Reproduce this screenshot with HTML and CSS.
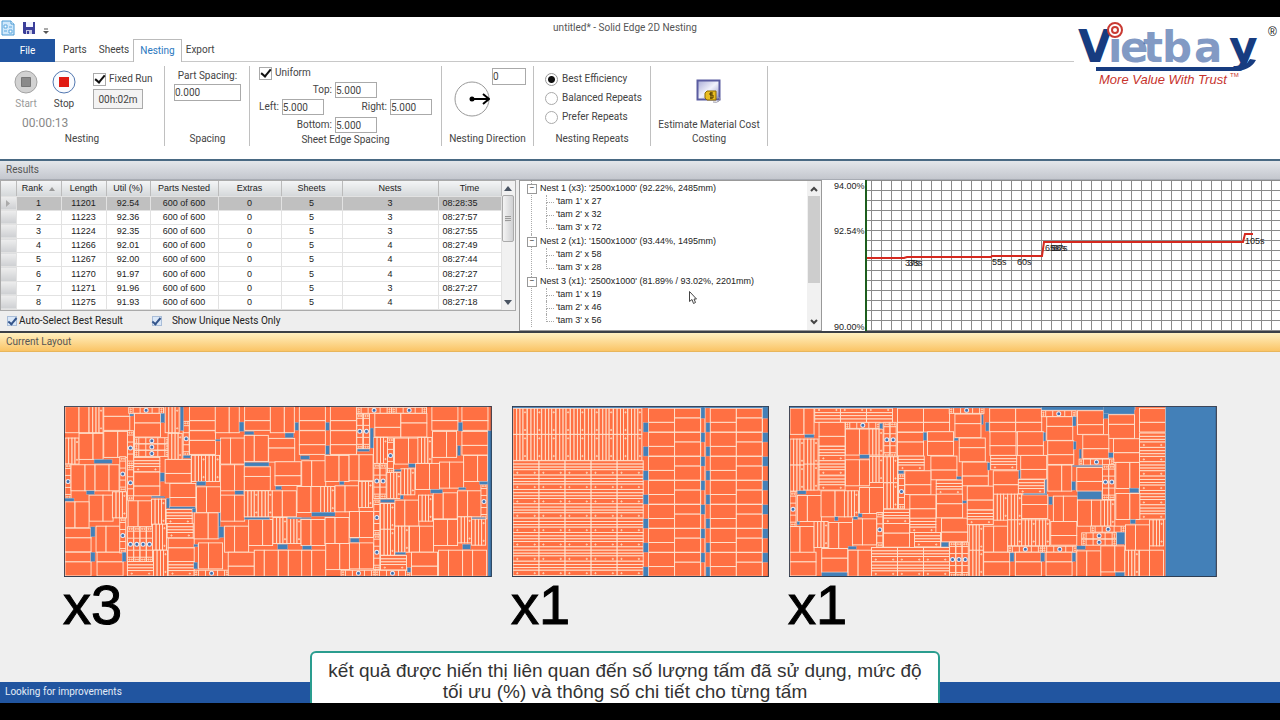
FILE: index.html
```html
<!DOCTYPE html>
<html lang="vi">
<head>
<meta charset="utf-8">
<title>untitled* - Solid Edge 2D Nesting</title>
<link rel="stylesheet" href="styles.css">
</head>
<body>
<div class="stage">
<main class="app">
  <header class="titlebar">
    <div class="quick">
      <svg class="doc-icon" width="14" height="16" viewBox="0 0 14 16"><path d="M1 1h9l3 3v11H1z" fill="#cfe8fb" stroke="#4a9ad4"/><path d="M10 1v3h3" fill="#fff" stroke="#4a9ad4"/><path d="M3 5h3v3H3zM8 7h3M3 11h3M8 10h3v3H8z" fill="#fff" stroke="#5aa7de"/></svg>
      <button class="plain" aria-label="Save"><svg width="12" height="12" viewBox="0 0 12 12"><path d="M0 0h12v12H1L0 11z" fill="#3b3f9a"/><path d="M3 0h7v5H3z" fill="#f3f5ff"/><path d="M3 8h6v4H3z" fill="#c9cbe6"/><path d="M4 9h2v3H4z" fill="#3b3f9a"/></svg></button>
      <button class="plain more" aria-label="Customize"><svg width="6" height="7" viewBox="0 0 6 7"><path d="M1 1h4" stroke="#555"/><path d="M0 3h6L3 6z" fill="#555"/></svg></button>
    </div>
    <h1>untitled* - Solid Edge 2D Nesting</h1>
  </header>
  <nav class="tabs">
    <button class="tab file">File</button><button class="tab">Parts</button><button class="tab">Sheets</button><button class="tab active">Nesting</button><button class="tab">Export</button>
  </nav>
  <section class="ribbon">
    <div class="group g-run">
      <div class="run-row">
        <button class="plain big off"><svg width="24" height="24" viewBox="0 0 24 24"><circle cx="12" cy="12" r="11" fill="#d2d2d2" stroke="#a3a3a3"/><path d="M7.500 7.500h9v9h-9z" fill="#8a8a8a" stroke="#777"/></svg><span>Start</span></button>
        <button class="plain big"><svg width="24" height="24" viewBox="0 0 24 24"><circle cx="12" cy="12" r="11" fill="#fafcff" stroke="#5277b0"/><path d="M7 7h10v10H7z" fill="#e01b14"/></svg><span>Stop</span></button>
        <div class="fixed"><label class="chk"><input type="checkbox" checked>Fixed Run</label><input class="box time" type="text" value="00h:02m" aria-label="Run time"></div>
      </div>
      <div class="timer">00:00:13</div>
      <h2>Nesting</h2>
    </div>
    <div class="group g-space">
      <label class="stack">Part Spacing:<input class="box" type="text" value="0.000"></label>
      <h2>Spacing</h2>
    </div>
    <div class="group g-edge">
      <label class="chk"><input type="checkbox" checked>Uniform</label>
      <label class="mid">Top:<input class="box" type="text" value="5.000"></label>
      <div class="sides"><label>Left:<input class="box" type="text" value="5.000"></label><label>Right:<input class="box" type="text" value="5.000"></label></div>
      <label class="mid">Bottom:<input class="box" type="text" value="5.000"></label>
      <h2>Sheet Edge Spacing</h2>
    </div>
    <div class="group g-dir">
      <div class="dir"><svg width="36" height="36" viewBox="0 0 36 36"><circle cx="18" cy="18" r="17" fill="#fff" stroke="#999"/><circle cx="18" cy="18" r="2.500"/><path d="M18 18h16M29 13l6 5-6 5" fill="none" stroke="#000" stroke-width="2"/></svg><input class="box" type="text" value="0" aria-label="Nesting angle"></div>
      <h2>Nesting Direction</h2>
    </div>
    <div class="group g-rep">
      <label><input type="radio" name="rep" checked>Best Efficiency</label>
      <label><input type="radio" name="rep">Balanced Repeats</label>
      <label><input type="radio" name="rep">Prefer Repeats</label>
      <h2>Nesting Repeats</h2>
    </div>
    <div class="group g-cost">
      <button class="plain cost"><svg width="26" height="26" viewBox="0 0 26 26"><defs><linearGradient id="scr" x2="1" y2="1"><stop offset="0" stop-color="#a9abd6"/><stop offset=".5" stop-color="#f0f1fb"/><stop offset="1" stop-color="#9193c6"/></linearGradient></defs><path d="M1.500 1.500h22v19h-22z" fill="url(#scr)" stroke="#5a5ca0" stroke-width="2"/><path d="M21 18q5 1 2 4-2 2-6 1" fill="none" stroke="#99a"/><path d="M9 14l2-2h9v9h-9l-2-2z" fill="#e9bd22" stroke="#8d6b00"/><path d="M17 14h-3v2h3v3h-3M15 13v7" fill="none" stroke="#4d3900"/></svg><span>Estimate Material Cost</span></button>
      <h2>Costing</h2>
    </div>
  </section>
  <h2 class="bar results-bar">Results</h2>
  <section class="results">
    <div class="left">
      <div class="gridwrap">
        <table>
          <colgroup><col class="c0"><col class="c1"><col class="c1"><col class="c2"><col class="c3"><col class="c4"><col class="c5"><col class="c6"><col class="c4"></colgroup>
          <thead><tr><th></th><th>Rank <svg class="sort" width="6" height="4" viewBox="0 0 6 4"><path d="M0 4l3-4 3 4z" fill="#999"/></svg></th><th>Length</th><th>Util (%)</th><th>Parts Nested</th><th>Extras</th><th>Sheets</th><th>Nests</th><th>Time</th></tr></thead>
          <tbody>
            <tr class="sel"><th><svg width="4" height="7" viewBox="0 0 4 7"><path d="M0 0l4 3.500L0 7z" fill="#aaa"/></svg></th><td>1</td><td>11201</td><td>92.54</td><td>600 of 600</td><td>0</td><td>5</td><td>3</td><td>08:28:35</td></tr>
            <tr><th></th><td>2</td><td>11223</td><td>92.36</td><td>600 of 600</td><td>0</td><td>5</td><td>3</td><td>08:27:57</td></tr>
            <tr><th></th><td>3</td><td>11224</td><td>92.35</td><td>600 of 600</td><td>0</td><td>5</td><td>3</td><td>08:27:55</td></tr>
            <tr><th></th><td>4</td><td>11266</td><td>92.01</td><td>600 of 600</td><td>0</td><td>5</td><td>4</td><td>08:27:49</td></tr>
            <tr><th></th><td>5</td><td>11267</td><td>92.00</td><td>600 of 600</td><td>0</td><td>5</td><td>4</td><td>08:27:44</td></tr>
            <tr><th></th><td>6</td><td>11270</td><td>91.97</td><td>600 of 600</td><td>0</td><td>5</td><td>4</td><td>08:27:27</td></tr>
            <tr><th></th><td>7</td><td>11271</td><td>91.96</td><td>600 of 600</td><td>0</td><td>5</td><td>3</td><td>08:27:27</td></tr>
            <tr><th></th><td>8</td><td>11275</td><td>91.93</td><td>600 of 600</td><td>0</td><td>5</td><td>4</td><td>08:27:18</td></tr>
          </tbody>
        </table>
        <div class="scroll aero"><svg width="8" height="5" viewBox="0 0 8 5"><path d="M0 5l4-5 4 5z" fill="#4b5563"/></svg><span class="thumb"></span><span class="fill"></span><svg width="8" height="5" viewBox="0 0 8 5"><path d="M0 0l4 5 4-5z" fill="#4b5563"/></svg></div>
      </div>
      <div class="opts"><label><input type="checkbox" checked>Auto-Select Best Result</label><label class="wide"><input type="checkbox" checked>Show Unique Nests Only</label></div>
    </div>
    <div class="treepane">
      <ul class="tree">
        <li><span class="node">Nest 1 (x3): '2500x1000' (92.22%, 2485mm)</span><ul><li>'tam 1' x 27</li><li>'tam 2' x 32</li><li>'tam 3' x 72</li></ul></li>
        <li><span class="node">Nest 2 (x1): '1500x1000' (93.44%, 1495mm)</span><ul><li>'tam 2' x 58</li><li>'tam 3' x 28</li></ul></li>
        <li><span class="node">Nest 3 (x1): '2500x1000' (81.89% / 93.02%, 2201mm)</span><ul><li>'tam 1' x 19</li><li>'tam 2' x 46</li><li>'tam 3' x 56</li></ul></li>
      </ul>
      <div class="scroll flat"><svg width="8" height="6" viewBox="0 0 8 6"><path d="M1 5l3-3 3 3" fill="none" stroke="#444" stroke-width="2"/></svg><span class="thumb"></span><span class="fill"></span><svg width="8" height="6" viewBox="0 0 8 6"><path d="M1 1l3 3 3-3" fill="none" stroke="#444" stroke-width="2"/></svg></div>
    </div>
    <svg class="chart" viewBox="0 0 458 151" preserveAspectRatio="xMinYMin slice" role="img" aria-label="Utilisation over time">
      <defs><pattern id="grid" x="49" y="0" width="10" height="10" patternUnits="userSpaceOnUse"><path d="M.5 0v10M0 .5h10" stroke="#8b8b8b" fill="none"/></pattern></defs>
      <path d="M45 0h413v151H45z" fill="url(#grid)"/>
      <path d="M44 0v151" stroke="#1d5e1d" stroke-width="2"/>
      <path d="M45 78h37l3-1h84l1-1h50l2-14h199l2-8h8" fill="none" stroke="#d5281e" stroke-width="2"/>
      <g class="axis"><text x="12" y="9">94.00%</text><text x="12" y="54">92.54%</text><text x="12" y="150">90.00%</text></g>
      <g class="marks"><text x="83" y="86">37s</text><text x="86" y="86">38s</text><text x="170" y="85">55s</text><text x="195" y="85">60s</text><text x="223" y="71">65s</text><text x="229" y="71">68s</text><text x="231" y="71">67s</text><text x="423" y="64">105s</text></g>
    </svg>
  </section>
  <h2 class="bar layout-bar">Current Layout</h2>
  <section class="canvas">
    <figure class="wide-sheet"><svg id="sheet1" viewBox="28 36 1282 513"></svg><figcaption>x3</figcaption></figure>
    <figure class="short-sheet"><svg id="sheet2" viewBox="37 36 770 513"></svg><figcaption>x1</figcaption></figure>
    <figure class="wide-sheet"><svg id="sheet3" viewBox="28 36 1282 513"></svg><figcaption>x1</figcaption></figure>
  </section>
  <footer class="status">Looking for improvements</footer>
  <svg class="cursor" width="8" height="13" viewBox="0 0 8 13"><path d="M.5.5v10l2.500-2 1.500 4 2-1-1.500-3.500h2.500z" fill="#fff" stroke="#444"/></svg>
  <svg class="logo" width="206" height="72" viewBox="0 0 206 72">
    <g class="mark"><text class="pale" x="34" y="43">i</text><text class="pale" x="46" y="43">e</text><text class="pale" x="69" y="43">t</text><text class="pale" x="88" y="43">b</text><text class="pale" x="120" y="43">a</text></g>
    <text class="strong" x="4" y="43">V</text><text class="strong" x="155" y="43">y</text>
    <path d="M22 48h138q12 0 16-8l6 1q-6 11-22 11H22z" fill="#173c80"/>
    <circle cx="41" cy="11" r="7" fill="#fff" stroke="#c93a32" stroke-width="2"/><circle cx="41" cy="11" r="3" fill="#fff" stroke="#c93a32" stroke-width="2"/>
    <text class="tag" x="25" y="65">More Value With Trust</text><text class="tm" x="156" y="58">TM</text>
    <text class="reg" x="194" y="17">®</text>
  </svg>
  <p class="caption">kết quả được hiến thị liên quan đến số lượng tấm đã sử dụng, mức độ<br>tối ưu (%) và thông số chi tiết cho từng tấm</p>
</main>
</div>
<script src="sheets.js"></script>
</body>
</html>
```
FILE: styles.css
```css
* { box-sizing: border-box; }
body { margin: 0; background: #000; color: #444; font-family: Roboto, "Noto Sans", sans-serif; font-size: 10px; line-height: 14px; }
h1, h2, p, ul, figure { margin: 0; padding: 0; font-weight: 400; font-size: inherit; }
ul { list-style: none; }
svg { display: block; }
button, input { font: inherit; color: inherit; margin: 0; }
.stage { height: 100vh; padding: 17px 0; }
.app { position: relative; height: 100%; display: flex; flex-direction: column; overflow: hidden; background: #fff; }
.plain { border: 0; background: none; padding: 0; }
.titlebar { display: flex; align-items: center; height: 22px; }
.quick { display: flex; align-items: center; gap: 8px; width: 120px; padding-left: 1px; }
.more { padding-top: 6px; }
h1 { flex: 1; text-align: center; padding-right: 150px; color: #555; }
.tabs { display: flex; height: 23px; border-bottom: 1px solid #c8c8c8; }
.tab { border: 0; background: none; padding: 0 6px; }
.tab.file { background: #2155a0; color: #fff; width: 55px; height: 23px; margin-right: 2px; }
.tab.active { background: #fff; border: 1px solid #bbb; border-bottom: 0; color: #2a78c0; height: 23px; }
.tab.active { margin-right: -2px; margin-left: -2px; }
.ribbon { display: flex; height: 97px; padding-top: 4px; }
.group { display: flex; flex-direction: column; height: 80px; border-right: 1px solid #c0c0c0; }
.group h2 { margin-top: auto; text-align: center; white-space: nowrap; }
.group label { white-space: nowrap; }
.g-run { width: 165px; }
.g-space { width: 85px; }
.g-edge { width: 192px; }
.g-dir { width: 92px; }
.g-rep { width: 117px; }
.g-cost { width: 117px; }
.run-row { display: flex; gap: 14px; padding: 4px 0 0 14px; height: 49px; }
.big { display: flex; flex-direction: column; align-items: center; gap: 3px; width: 24px; }
.off { color: #9a9a9a; }
.fixed { display: flex; flex-direction: column; gap: 3px; padding: 2px 0 0 3px; }
.chk { display: flex; align-items: center; gap: 3px; }
input[type=checkbox] { appearance: none; flex: none; width: 13px; height: 13px; border: 1px solid #aaa; background: #fff; display: grid; place-items: center; }
input[type=checkbox]::after { content: ""; width: 4px; height: 8px; border: solid #111; border-width: 0 2px 2px 0; transform: rotate(40deg); margin-top: -2px; }
.box { border: 1px solid #aaa; background: #fff; height: 16px; padding: 0; width: 42px; }
.time { width: 50px; height: 20px; text-align: center; background: #f3f3f3; }
.timer { padding-left: 22px; font-size: 12px; color: #888; line-height: 16px; }
.g-space { padding: 3px 8px 0 9px; }
.stack { display: flex; flex-direction: column; align-items: center; gap: 1px; }
.stack .box { width: 67px; height: 17px; }
.g-edge { padding: 0 9px; }
.g-edge label { display: flex; align-items: center; gap: 3px; }
.g-edge .mid { width: 118px; justify-content: flex-end; margin-top: 2px; }
.sides { display: flex; justify-content: space-between; margin-top: 1px; }
.g-edge h2 { line-height: 12px; }
.dir { display: flex; padding-left: 12px; gap: 2px; }
.dir svg { margin-top: 15px; }
.dir .box { width: 34px; height: 17px; margin-top: 2px; }
.g-rep { padding: 4px 0 0 11px; gap: 1px; }
.g-rep label { display: flex; align-items: center; gap: 4px; height: 18px; }
.g-rep h2 { padding-right: 11px; }
input[type=radio] { appearance: none; flex: none; width: 13px; height: 13px; border: 1px solid #aaa; border-radius: 50%; background: #fff; }
input[type=radio]:checked { background: radial-gradient(#111 3px, #fff 4px); border-color: #999; }
.cost { display: flex; flex-direction: column; align-items: center; gap: 13px; padding-top: 13px; white-space: nowrap; }
.bar { height: 21px; padding-left: 6px; line-height: 18px; border-top: 2px solid #496983; border-bottom: 1px solid #a7abb3; background: linear-gradient(#e3e6ea, #c4c7ce); color: #555; flex: none; }
.layout-bar { border-top: 2px solid #3b4046; border-bottom: 1px solid #e8b65c; background: linear-gradient(#fff0c0, #fac466); }
.results { display: flex; height: 151px; background: #eee; flex: none; }
.left { width: 516px; display: flex; flex-direction: column; }
.gridwrap { display: flex; height: 131px; background: #fff; border: 1px solid #aaa; }
.gridwrap, .tree { font-family: "Liberation Sans", sans-serif; font-size: 9px; color: #222; }
table { table-layout: fixed; width: 100%; border-collapse: collapse; flex: 1; height: 129px; }
th, td { padding: 0; height: 14px; line-height: 13px; font-weight: 400; text-align: center; border-right: 1px solid #e2e2e2; border-bottom: 1px solid #e2e2e2; white-space: nowrap; }
thead th { height: 15px; background: linear-gradient(#f4f5f6, #d5d8da); border-right-color: #bbb; }
tbody th { background: linear-gradient(#eee, #cdcfd2); }
tbody th svg { margin: auto; }
.sort { display: inline; margin-left: 4px; }
.sel td { background: #c0c0c0; }
td:last-child { text-align: left; padding-left: 4px; }
.c0 { width: 15px; } .c1 { width: 45px; } .c2 { width: 44px; } .c3 { width: 68px; } .c4 { width: 63px; } .c5 { width: 61px; } .c6 { width: 96px; }
.scroll { display: flex; flex-direction: column; align-items: center; width: 14px; padding: 5px 0; background: #f1f1f1; }
.scroll .fill { flex: 1; }
.aero .thumb { width: 12px; height: 47px; margin-top: 4px; border: 1px solid #aaa; border-radius: 2px; background: repeating-linear-gradient(#999 0 1px, #ddd 1px 2px) center / 6px 6px no-repeat, linear-gradient(90deg, #f4f4f4, #cfd0d2); }
.flat .thumb { width: 12px; height: 87px; margin-top: 4px; background: #cdcdcd; }
.opts { display: flex; gap: 29px; padding: 3px 7px; color: #222; }
.opts label { display: flex; align-items: center; gap: 2px; }
.opts .wide { gap: 10px; }
.opts input[type=checkbox] { width: 10px; height: 10px; border-color: #a9bdd8; background: #dbe8f8; }
.opts input[type=checkbox]::after { width: 3px; height: 7px; border-color: #34558b; }
.treepane { width: 303px; margin-left: 3px; display: flex; background: #fff; border: 1px solid #999; overflow: hidden; }
.tree { flex: 1; padding-left: 6px; }
.tree > li { position: relative; padding-left: 14px; }
.tree > li::before { content: ""; position: absolute; left: 5px; top: 0; bottom: 0; border-left: 1px dotted #aaa; }
.tree li { line-height: 13px; white-space: nowrap; }
.node { display: block; height: 14px; line-height: 14px; }
.node::before { content: "−"; position: absolute; left: 1px; top: 3px; width: 8px; height: 8px; border: 1px solid #999; background: #fff; font-size: 8px; line-height: 6px; text-align: center; }
.tree ul { margin-left: 6px; }
.tree ul li { position: relative; height: 13px; padding-left: 10px; }
.tree ul li::before { content: ""; position: absolute; left: 0; top: 0; width: 7px; height: 7px; border: dotted #aaa; border-width: 0 0 1px 1px; }
.tree ul li:not(:last-child)::after { content: ""; position: absolute; left: 0; top: 7px; height: 6px; border-left: 1px dotted #aaa; }
.chart { flex: 1; min-width: 0; height: 151px; background: #fff; }
.chart text { font-family: "Liberation Sans", sans-serif; font-size: 9px; fill: #222; }
.canvas { flex: 1; display: flex; align-items: flex-start; gap: 20px; padding: 54px 63px 0 64px; background: #efefef; min-height: 0; }
.wide-sheet { flex: 1282 1 0; }
.short-sheet { flex: 770 1 0; }
.canvas svg { width: 100%; height: auto; }
figcaption { font-family: "Liberation Sans", sans-serif; font-size: 56px; line-height: 56px; color: #000; margin-left: -1px; -webkit-text-stroke: 1px #000; }
.status { height: 21px; flex: none; background: #2155a0; color: #e4ecf7; line-height: 20px; padding-left: 5px; }
.cursor { position: absolute; left: 689px; top: 274px; }
.logo { position: absolute; right: 0; top: 2px; background: #fff; }
.mark, .strong { font-family: "DejaVu Sans", sans-serif; font-weight: 700; font-size: 42px; }
.pale { fill: #2d559c; fill-opacity: .6; }
.strong { font-size: 44px; fill: #173c80; }
.tag { font-family: "Liberation Sans", sans-serif; font-style: italic; font-size: 13px; fill: #c7332c; }
.tm { font-family: "Liberation Sans", sans-serif; font-size: 6px; fill: #c7332c; }
.reg { font-family: "Liberation Sans", sans-serif; font-size: 12px; fill: #111; }
.caption { position: absolute; left: 50%; bottom: -6px; width: 630px; margin-left: -330px; height: 58px; padding: 7px 0 0; border: 2px solid #2a9d8f; border-radius: 6px; background: #fff; text-align: center; white-space: nowrap; font-family: "Liberation Sans", sans-serif; font-size: 19px; line-height: 21px; color: #333; }
```
FILE: sheets.js
```js
// Parts: V/v and H/h are two-panel plates, S/Z/Y drilled strips, C/D ladder parts.
const plate = (x, y, w, h) => `<rect x="${x}" y="${y}" width="${w}" height="${h}"/>`;
const hole = (x, y) => `<circle class="hole" cx="${x}" cy="${y}" r="2"/>`;
const shapes = {
  V: (x, y) => plate(x, y, 42, 78) + plate(x + 42, y, 30, 78),
  v: (x, y) => plate(x, y, 30, 78) + plate(x + 30, y, 42, 78),
  H: (x, y) => plate(x, y, 78, 42) + plate(x, y + 42, 78, 29),
  h: (x, y) => plate(x, y, 78, 29) + plate(x, y + 29, 78, 42),
  S: (x, y) => plate(x, y, 11, 78) + plate(x + 11, y, 10, 78) + plate(x + 21, y, 9, 78) + plate(x + 30, y, 12, 78) + hole(x + 36, y + 12) + hole(x + 36, y + 65),
  Z: (x, y) => plate(x, y, 78, 10) + plate(x, y + 10, 78, 9) + plate(x, y + 19, 78, 8) + plate(x, y + 27, 78, 16) + hole(x + 13, y + 36) + hole(x + 65, y + 36),
  Y: (x, y) => plate(x, y, 78, 13) + plate(x, y + 13, 78, 9) + plate(x, y + 22, 78, 10) + plate(x, y + 32, 78, 10) + hole(x + 13, y + 5) + hole(x + 65, y + 5),
  C: (x, y) => plate(x, y, 18, 104) + [13, 34, 70, 91].map(d => `<path d="M${x} ${y + d}h18"/>`).join("") + hole(x + 6, y + 6) + hole(x + 13, y + 6) + hole(x + 6, y + 98) + hole(x + 13, y + 98) + `<circle class="slot" cx="${x + 9}" cy="${y + 52}" r="6"/>`,
  D: (x, y) => plate(x, y, 104, 18) + [13, 34, 70, 91].map(d => `<path d="M${x + d} ${y}v18"/>`).join("") + hole(x + 6, y + 6) + hole(x + 6, y + 13) + hole(x + 98, y + 6) + hole(x + 98, y + 13) + `<circle class="slot" cx="${x + 52}" cy="${y + 9}" r="6"/>`
};
const parts = (list, dx = 0) => list.trim().split(/\s+/).map(p => {
  const [x, y] = p.slice(1).split(",").map(Number);
  return shapes[p[0]](x + dx, y);
}).join("");
const gaps = (list, dx = 0) => list.trim().split(/\s+/).map(g => {
  const [x, y, w, h] = g.split(",").map(Number);
  return `<rect class="gap" x="${x + dx}" y="${y}" width="${w}" height="${h}"/>`;
}).join("");
const style = `<style>.parts rect{fill:#ff7043}.parts rect,.parts path{stroke:#ffe3cf;stroke-width:2.800}.hole{fill:#ffb08c;stroke:#ffe9cf;stroke-width:2}.slot{fill:#3f6fae;stroke:#e8eef8;stroke-width:3}rect.gap{fill:#4380b8;stroke:#c9c5cf;stroke-width:1}</style>`;
function draw(id, x, w, body, cuts) {
  document.getElementById(id).innerHTML = style +
    `<rect x="${x}" y="36" width="${w}" height="513" fill="#ff7043"/><g class="parts">${body}</g>${cuts}` +
    `<rect x="${x + 1}" y="37" width="${w - 3}" height="510" fill="none" stroke="#23384f" stroke-width="3"/>`;
}

const left = `V31,38 S103,38 h147,38 D222,40 h239,58 S331,38 C385,82 H404,38 h404,110 V481,38 H569,38 V646,38
S31,132 V73,118 V147,112 C218,110 D239,131 D239,150 D239,169 S340,118 Z237,190 H237,234 C218,214 C195,188 C31,210 V49,212 V121,212
H331,196 S410,184 S452,184 v497,132 v568,124 h641,133 V497,212 h568,218 H660,203 v425,278 H345,268 V103,303 S173,293 v220,320 S290,315
V497,303 S568,290 S610,290 v652,290 v31,323 h31,402 h31,474 v124,396 h127,474 C195,372 C218,398 C237,398 C256,398 C275,398 Z218,502
S293,390 S296,468 Z334,346 Z337,388 h340,432 Z340,502 V418,356 v431,446 D418,528 v509,396 V581,376 S654,370 S696,370 H520,474 v598,468 v670,468`;
const right = `v80,468 H73,38 H73,110 H166,38 H166,110 C245,60 C265,60 D245,40 D350,40 H299,58 h377,58 H470,38 H560,38 H560,112 V472,112 V565,184
v80,200 V150,184 v222,182 S295,130 C337,132 V358,132 S428,130 C296,209 C315,209 S335,235 S377,224 V421,208 v493,204 V66,277 S137,277 v180,275
S250,262 C296,318 C296,422 v359,318 S430,303 v474,296 v547,290 C617,270 v78,376 v150,370 v223,352 V152,448 v223,446 D198,528 D300,528
S316,328 S316,405 Z316,484 S359,396 v403,396 V475,376 S547,368 S589,375 H409,474 v490,468 v562,468`;
draw("sheet1", 28, 1282, parts(left) + parts(right, 660),
  gaps(`118,196,54,12 318,58,12,28 376,38,10,72 553,84,14,28 569,112,28,10 316,236,13,26 569,205,73,11 425,262,28,12 385,184,22,8 95,290,24,11
30,312,28,9 540,290,26,11 335,312,9,30 345,338,76,6 412,342,11,12 290,306,40,5 108,398,13,30 108,474,13,28 202,474,12,28 417,450,12,8
417,504,11,20 491,356,5,76 492,398,15,32 568,370,76,6 225,60,12,6 482,136,14,5`) +
  gaps(`30,117,26,14 60,85,11,24 152,85,11,24 152,155,11,26 76,185,28,11 285,102,10,60 247,165,36,7 193,262,14,10 2,276,18,11 400,209,20,11
358,226,20,6 466,286,36,11 549,85,13,26 547,155,9,30 612,262,26,9 638,110,12,437 316,316,42,9 375,303,10,12 110,354,70,12 38,370,70,4
226,432,26,12 8,450,30,15 82,455,28,11 562,450,24,15 360,474,32,7 396,520,11,14 590,370,40,4 550,280,22,7`, 660));

let plates = "", notches = "788,38,16,35 603,38,12,35";
for (let i = 0; i < 9; i++) plates += ` S${40 + i * 43},43 S${40 + i * 43},121`;
for (let c = 0; c < 5; c++) for (let r = 0; r < 8; r++) plates += ` Z${40 + c * 78},${200 + r * 43}`;
for (let i = 0; i < 7; i++) {
  const y = 43 + i * 72;
  plates += ` H446,${y} h524,${y} H631,${y} h709,${y}`;
  notches += ` 430,${y + 43},15,28 618,${y + 43},12,28`;
  if (i) notches += ` 603,${y + 1},12,28 788,${y + 1},16,28`;
}
draw("sheet2", 37, 770, parts(plates) + `<path d="M602 38v510M615 38v510M787 38v510"/>`, gaps("38,37,767,5 " + notches));

draw("sheet3", 28, 1282, parts(`V31,43 Y105,43 Y182,43 Y260,43 H353,43 H431,43 D508,40 h525,60 H629,43 H707,43 D784,50 h800,68 H892,50 h985,62 H1078,43
S31,135 S73,135 S31,213 S73,210 H118,85 Z118,157 Z118,200 Z118,245 V197,105 D197,85 S268,105 S268,187 C312,85 C331,85 V197,197 S311,188 S311,266
h353,115 h443,113 Z355,186 H453,186 h538,132 H547,204 H375,230 C356,240 Z469,258 H630,113 H712,113 Z632,184 H722,184 H640,230 Z715,256
H803,140 V803,213 H908,122 H1000,134 D897,195 H890,220 C967,212 C986,212 V1007,205 Z1078,117 Z1078,160 Z1078,203 Z1078,246 Z1078,289 Z1078,332
v53,304 C31,293 V124,290 S194,290 v239,280 v31,397 S103,382 v147,385 v218,374 C291,355 Z311,345 h311,388 H390,302 Z390,372 Z404,415 h470,300
H485,372 H562,276 Z562,348 S641,300 S683,300 h725,302 v820,306 V892,318 S962,318 V1007,298 S568,392 S568,468 v611,396 S683,377 S725,377 S767,377
H812,382 D932,396 D905,416 D905,435 D684,456 D787,456 v1036,392 S1108,377 h31,474 h126,463 v205,468 Z275,460 Z275,503 Z353,460 Z353,503 Z431,460
Z431,503 C509,444 C528,444 C547,444 h611,474 h706,474 h798,474 v890,470 V962,455 S1034,468 v1078,468`),
  gaps(`1156,38,152,509 30,37,760,5 785,38,280,10 970,38,92,22 970,58,14,16 75,121,28,10 126,534,76,12 240,182,28,11 300,88,9,16 430,115,11,24
523,132,12,8 605,62,5,30 617,85,10,26 790,115,7,26 878,68,10,28 880,142,8,24 897,165,7,28 985,176,14,15 875,262,12,26 892,292,72,23 1048,282,28,14
1050,376,16,13 1010,414,24,36 890,455,26,11 1005,534,28,12 690,476,12,26 782,476,12,26 876,476,11,26 806,308,11,24 484,444,22,14 356,230,16,9
530,247,14,8 716,228,5,26 795,256,5,46 730,298,70,4 53,290,26,10 165,368,10,12 220,368,14,8 235,358,12,11 205,456,25,9 548,320,12,7 622,206,8,22
877,214,90,4 52,382,8,10`));
```
